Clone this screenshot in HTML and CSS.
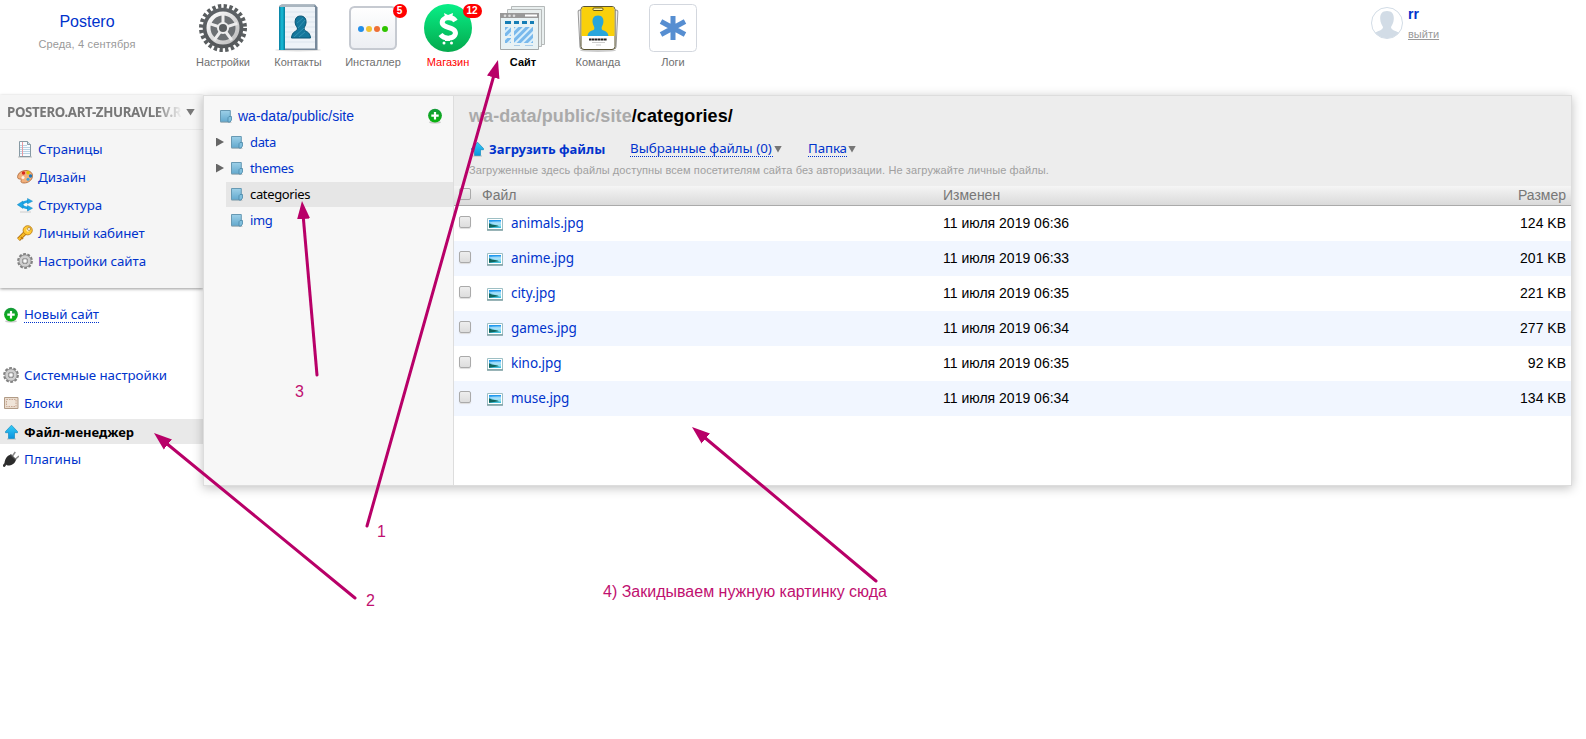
FILE: index.html
```html
<!DOCTYPE html>
<html lang="ru">
<head>
<meta charset="utf-8">
<title>Postero</title>
<link rel="stylesheet" href="styles.css">
</head>
<body>
<svg class="defs" width="0" height="0">
  <defs>
    <linearGradient id="metal" x1="0" y1="0" x2="0" y2="1"><stop offset="0" stop-color="#5d6266"/><stop offset="1" stop-color="#55585a"/></linearGradient>
    <linearGradient id="silver" x1="0" y1="0" x2="1" y2="1"><stop offset="0" stop-color="#fff"/><stop offset="1" stop-color="#bbb"/></linearGradient>
    <linearGradient id="green" x1="0" y1="0" x2="0" y2="1"><stop offset="0" stop-color="#08ef87"/><stop offset="1" stop-color="#04a94d"/></linearGradient>
    <linearGradient id="plus" x1="0" y1="0" x2="0" y2="1"><stop offset="0" stop-color="#169a3c"/><stop offset="1" stop-color="#08b40c"/></linearGradient>
    <linearGradient id="tile" x1="0" y1="0" x2="0" y2="1"><stop offset="0" stop-color="#fff"/><stop offset="1" stop-color="#eceef2"/></linearGradient>
    <linearGradient id="book" x1="0" y1="0" x2="1" y2="0"><stop offset="0" stop-color="#087da0"/><stop offset=".5" stop-color="#18bdd8"/><stop offset="1" stop-color="#047c9c"/></linearGradient>
    <linearGradient id="fold" x1="0" y1="0" x2="0" y2="1"><stop offset="0" stop-color="#9dd0e8"/><stop offset="1" stop-color="#63a9ce"/></linearGradient>
    <linearGradient id="sky" x1="0" y1="0" x2="0" y2="1"><stop offset="0" stop-color="#1590ee"/><stop offset=".65" stop-color="#9be6f5"/><stop offset="1" stop-color="#2cb8d8"/></linearGradient>
    <linearGradient id="blue" x1="0" y1="0" x2="0" y2="1"><stop offset="0" stop-color="#35ccf5"/><stop offset="1" stop-color="#0a93e0"/></linearGradient>
    <pattern id="stripes" width="5" height="5" patternUnits="userSpaceOnUse" patternTransform="rotate(45)"><rect width="5" height="5" fill="#d9effb"/><rect width="3" height="5" fill="#79b9ec"/></pattern>
    <symbol id="i-plus" viewBox="0 0 16 16"><ellipse cx="8" cy="14.2" rx="6" ry="1.4" fill="#aaa" opacity=".6"/><circle cx="8" cy="7.6" r="6.9" fill="url(#plus)"/><path d="M8 4v7.4M4.3 7.7h7.4" stroke="#fff" stroke-width="2.2"/></symbol>
    <symbol id="i-gear" viewBox="0 0 16 16"><circle cx="8" cy="8" r="6.7" fill="none" stroke="#818181" stroke-width="2.4" stroke-dasharray="2.8 1.41"/><circle cx="8" cy="8" r="4.4" fill="none" stroke="#8a8a8a" stroke-width="4"/><circle cx="8" cy="8" r="4.4" fill="none" stroke="#cfcfcf" stroke-width="2.6"/><circle cx="8" cy="8" r="2.3" fill="#fafafa" stroke="#8b8b8b" stroke-width=".8"/></symbol>
    <symbol id="i-up" viewBox="0 0 16 16"><path d="M4 15h9" stroke="#bbb"/><path d="M8.500 1.200 14.500 7.500v1.200h-3v5.700H5.500V8.700h-3V7.500z" fill="url(#blue)" stroke="#168cc0" stroke-width=".7"/></symbol>
    <symbol id="i-folder" viewBox="0 0 12 13"><path d="M.5 12.500h11" stroke="#ccc"/><path d="M.5.5h9.800v11.300H.5z" fill="url(#fold)" stroke="#6799b3"/><path d="M8 12V7.700l1-1.200h2.500V10L10 12z" fill="#80bfdd" stroke="#4b89aa" stroke-width=".8"/></symbol>
    <symbol id="i-image" viewBox="0 0 16 13"><path d="M.5.5h15v11.300H.5z" fill="#fff" stroke="#9dbfc4"/><path d="M0 12h16" stroke="#71969a" stroke-width="1.300"/><path d="M2 2h12v8H2z" fill="url(#sky)"/><path d="M2 5.200q3 1.400 6 1.800t4 1.200L2 9.800z" fill="#11665e"/><path d="M2 4.500q4-1.500 12-1V6q-6 1.300-12-1.500z" fill="#dff8ff" opacity=".5"/></symbol>
  </defs>
</svg>

<header class="top">
  <div class="account"><a class="account-name">Postero</a><div class="date">Среда, 4 сентября</div></div>
  <nav class="apps">
    <a class="app"><svg width="48" height="48" viewBox="0 0 48 48"><circle cx="24" cy="24" r="21.800" fill="none" stroke="#5a5e60" stroke-width="4.400" stroke-dasharray="3.300 2.407"/><circle cx="24" cy="24" r="20.300" fill="url(#metal)"/><circle cx="24" cy="24" r="14.500" fill="#6c7073" stroke="url(#silver)" stroke-width="4"/><path d="M24 24V9M24 24 9.700 19.400M24 24l14.300-4.600M24 24l-8.800 12.100M24 24l8.800 12.100" stroke="#ececec" stroke-width="3"/><circle cx="24" cy="24" r="6" fill="#eee"/><circle cx="24" cy="24" r="4" fill="#5a5e60"/></svg><span>Настройки</span></a>
    <a class="app"><svg width="48" height="48" viewBox="0 0 48 48"><ellipse cx="24" cy="46" rx="23" ry="1.500" fill="#ccc" opacity=".6"/><path d="M5 2 8 .5h33l2.500 3V46H5z" fill="#77899b"/><path d="M10 3h31v41.500H10z" fill="#eef3f8"/><path d="M11 8h30M11 13h30M11 18h30M11 23h30M11 28h30M11 33h30M11 38h30" stroke="#d7e1eb" stroke-width=".8"/><path d="M5 3h6v43H5z" fill="url(#book)"/><path d="M7 .5h34l-1 2.500H5z" fill="#aab6c0"/><path d="M26.500 12c4 0 6 3 5.500 7-.4 3-2 4-2 6 1 3 6 2 6.500 9h-19c.5-7 5-6 6-9 0-2-2-3-2.300-6-.4-4 1.300-7 5.300-7z" fill="#14779c" stroke="#075474"/><path d="m23 19 6-5m-5 10 7-8M20 33l10-9m-5 9 6-5" stroke="#3794b2" stroke-width=".9"/></svg><span>Контакты</span></a>
    <a class="app"><svg width="48" height="48" viewBox="0 0 48 48"><rect x="1" y="3" width="46" height="42" rx="4.500" fill="url(#tile)" stroke="#c6cad1" stroke-width="2"/><circle cx="12" cy="25" r="3" fill="#238ee8"/><circle cx="20" cy="25" r="3" fill="#f1c232"/><circle cx="28" cy="25" r="3" fill="#ee6f35"/><circle cx="36" cy="25" r="3" fill="#2fc400"/></svg><b class="badge">5</b><span>Инсталлер</span></a>
    <a class="app app-red"><svg width="48" height="48" viewBox="0 0 48 48"><circle cx="24" cy="24" r="24" fill="url(#green)"/><path d="M31.500 17c-2-3.200-6-3.500-8.500-3.100-5 .8-6.200 5.300-3 7.600 3 2.200 8.400 2.200 10.500 5 2.300 3.200 0 7.200-5.300 7.600-3 .2-6.500-.8-8.700-3.600" fill="none" stroke="#fff" stroke-width="5"/><path d="m21 13-1-4 4 2 5-2-1 6zM21 33h5v4h-5z" fill="#fff"/><circle cx="20" cy="39" r="1.500" fill="#fff"/><circle cx="27.500" cy="39" r="1.500" fill="#fff"/></svg><b class="badge badge-wide">12</b><span>Магазин</span></a>
    <a class="app app-on"><svg width="48" height="48" viewBox="0 0 48 48"><path d="M12.500 2.500h33v38h-33z" fill="#e8eeee" stroke="#b5b9b9"/><path d="M8.500 5.500h34v37h-34z" fill="#e8eeee" stroke="#b5b9b9"/><path d="M1.500 9.500h38v36h-38z" fill="#e8f2f4" stroke="#a5aaaa"/><path d="M1 9h39v5H1z" fill="#999"/><path d="M26 10.500h12v2H26z" fill="#fff"/><circle cx="6" cy="11.700" r="1.300" fill="#ddd"/><circle cx="10.500" cy="11.700" r="1.300" fill="#ddd"/><circle cx="15" cy="11.700" r="1.300" fill="#ddd"/><path d="M6 17h6v3H6zm9 0h5v3h-5zm8 0h5v3h-5zm8 0h4v3h-4z" fill="#147db5"/><path d="M6 23h6v9H6zm0 11h6v5H6zm9-11h19v16H15z" fill="url(#stripes)"/><path d="M15 41.500h6m5 0h8" stroke="#a9cce7"/></svg><span>Сайт</span></a>
    <a class="app"><svg width="48" height="48" viewBox="0 0 48 48"><ellipse cx="24" cy="46.500" rx="18" ry="1.500" fill="#ccc"/><rect x="5" y="5" width="34" height="39" rx="2" fill="#eee" stroke="#999" transform="rotate(-3 24 24)"/><rect x="8" y="5" width="35" height="39" rx="2" fill="#eee" stroke="#999" transform="rotate(3 24 24)"/><rect x="7" y="2.500" width="34" height="43" rx="3" fill="#fff" stroke="#5b5431"/><path d="M7.500 32V6q0-3 3-3H38q2.500 0 2.500 3v26z" fill="#f9d00b"/><rect x="19" y="4" width="10" height="2.500" rx="1" fill="#fff5ac" stroke="#665814"/><path d="M24 11.500c4.500 0 6 3.500 5.300 7.500-.5 2.500-2 3.500-1.600 6 .5 2.200 6 1 6.800 7h-21c.8-6 6-4.800 6.800-7 .4-2.500-1.200-3.500-1.600-6-.7-4 .8-7.500 5.300-7.500z" fill="#27a6dc"/><path d="M15 35.500h18" stroke="#222" stroke-width="2" stroke-dasharray="2.500 .4"/><path d="M18 38.500h13m-9 2.500h5" stroke="#ccc"/></svg><span>Команда</span></a>
    <a class="app"><svg width="48" height="48" viewBox="0 0 48 48"><rect x=".5" y=".5" width="47" height="47" rx="4" fill="#fff" stroke="#d3d7de"/><path d="M24 12v24M12 17.500l24 13M36 17.500l-24 13" stroke="#568ed1" stroke-width="5"/></svg><span>Логи</span></a>
  </nav>
  <div class="user">
    <svg width="32" height="32" viewBox="0 0 32 32"><circle cx="16" cy="16" r="15.500" fill="#fff" stroke="#d2dce6"/><path d="M16 4c5 0 7 3 6.800 8-.2 4-1.800 6-2.800 8 0 3 4 3.500 8 5.600A15.500 15.500 0 0 1 4 25.600C8 23.500 12 23 12 20c-1-2-2.600-4-2.800-8C9 7 11 4 16 4z" fill="#d2dce6"/></svg>
    <div class="user-text"><b>rr</b><a>выйти</a></div>
  </div>
</header>

<div class="main">
  <aside class="side">
    <section class="site">
      <div class="site-head"><span class="domain">POSTERO.ART-ZHURAVLEV.R</span><i class="down"></i></div>
      <ul class="menu">
        <li><svg width="16" height="17" viewBox="0 0 16 17"><path d="M1 16h14" stroke="#bbb"/><path d="M2.500.500h8l3 3v12h-11z" fill="#f7fbff" stroke="#879aa4"/><path d="M10.500.5v3h3" fill="#cde" stroke="#879aa4"/><path d="M3 4.500h7M3 6.500h10M3 8.500h10M3 10.500h10M3 12.500h10" stroke="#b8d3e4"/><path d="M5.500 1v14" stroke="#e69aa0"/></svg><a>Страницы</a></li>
        <li><svg width="16" height="16" viewBox="0 0 16 16"><path d="M9 1.500c4 0 7 2.500 6.500 6-.5 3.500-4 6.500-8.500 6.500-2.500 0-3.500-1-2.800-2.500.5-1.200-.4-1.500-1.700-1.500C.5 10 .2 8 1 6c1.200-3 4.500-4.500 8-4.500z" fill="#f2b07c" stroke="#ab6231" stroke-width=".8"/><circle cx="6.500" cy="4" r="1.700" fill="#d9271e"/><circle cx="11" cy="3.800" r="1.700" fill="#e0c300"/><circle cx="13.500" cy="7" r="1.700" fill="#1b77ba"/><circle cx="11" cy="10.300" r="1.500" fill="#41a4d6"/><circle cx="6" cy="8.500" r="1.500" fill="#fff3e6"/></svg><a>Дизайн</a></li>
        <li><svg width="16" height="16" viewBox="0 0 16 16"><path d="M3 15h11" stroke="#ccc"/><path d="M12 4C8 4.300 5.500 6 3.500 7.700c2 2 4.500 3.300 8.500 3.600" fill="none" stroke="#1ba4e6" stroke-width="2.600"/><path d="M.3 7.700 6 4v7.400zM10.500 1.500l5 2.700-5 2.600zM10.500 8.500l5 2.700-5 2.800z" fill="#1da8e8" stroke="#1585bd" stroke-width=".5"/></svg><a>Структура</a></li>
        <li><svg width="16" height="16" viewBox="0 0 16 16"><path d="m8.500 7.500-7 7" stroke="#a9660d" stroke-width="4"/><path d="m9 7-7.400 7.400" stroke="#f7ba24" stroke-width="2.500"/><path d="m4 12 2 2" stroke="#bd7b12" stroke-width="1.600"/><circle cx="10.700" cy="5.300" r="4.600" fill="#ffc934" stroke="#b77710" stroke-width=".8"/><path d="m10 4 2 2" stroke="#fff2c2" stroke-width="3"/><circle cx="12" cy="4" r="1.500" fill="#fff" stroke="#9d742c" stroke-width=".7"/></svg><a>Личный кабинет</a></li>
        <li><svg width="16" height="16"><use href="#i-gear"/></svg><a>Настройки сайта</a></li>
      </ul>
    </section>
    <div class="new"><svg width="16" height="16"><use href="#i-plus"/></svg><a>Новый сайт</a></div>
    <ul class="menu system">
      <li><svg width="16" height="16"><use href="#i-gear"/></svg><a>Системные настройки</a></li>
      <li><svg width="16" height="16" viewBox="0 0 16 16"><path d="M1.500 2.500h13.500v11H1.500z" fill="#eadccd" stroke="#b19b86"/><path d="M3.500 4.500h9.500v7H3.500z" fill="#efe4d8" stroke="#c9a894" stroke-dasharray="1.500 1"/></svg><a>Блоки</a></li>
      <li class="current"><svg width="16" height="16"><use href="#i-up"/></svg><a>Файл-менеджер</a></li>
      <li><svg width="16" height="16" viewBox="0 0 16 16"><path d="m.3 15.500 3.500-4" stroke="#333" stroke-width="2.600"/><path d="M1.500 12c.5-5 3-7.500 6.500-8.500l5 5c-1 4-4 6-8.500 6z" fill="#2c2c2c"/><path d="m9.500 5 2.800-4m0 7.300L16 5" stroke="#8a8a8a" stroke-width="1.500"/><path d="m7.500 3.500 5.500 5.500" stroke="#555" stroke-width="1.300"/></svg><a>Плагины</a></li>
    </ul>
  </aside>

  <main class="panel">
    <section class="tree">
      <div class="root"><svg width="12" height="13"><use href="#i-folder"/></svg><a>wa-data/public/site</a><svg class="add" width="16" height="16"><use href="#i-plus"/></svg></div>
      <div class="node"><i class="right"></i><p><svg width="12" height="13"><use href="#i-folder"/></svg><a>data</a></p></div>
      <div class="node"><i class="right"></i><p><svg width="12" height="13"><use href="#i-folder"/></svg><a>themes</a></p></div>
      <div class="node picked"><i></i><p><svg width="12" height="13"><use href="#i-folder"/></svg><a>categories</a></p></div>
      <div class="node"><i></i><p><svg width="12" height="13"><use href="#i-folder"/></svg><a>img</a></p></div>
    </section>
    <section class="files">
      <div class="files-head">
        <h1><span>wa-data/public/site</span>/categories/</h1>
        <div class="tools"><svg width="16" height="16"><use href="#i-up"/></svg><a class="upload">Загрузить файлы</a><a class="drop chosen">Выбранные файлы (0)</a><i class="down"></i><a class="drop dir">Папка</a><i class="down"></i></div>
        <p class="note">Загруженные здесь файлы доступны всем посетителям сайта без авторизации. Не загружайте личные файлы.</p>
      </div>
      <div class="row heading"><i class="check"></i><span class="name">Файл</span><span class="time">Изменен</span><span class="size">Размер</span></div>
      <div class="row"><i class="check"></i><svg width="16" height="13"><use href="#i-image"/></svg><a class="name">animals.jpg</a><span class="time">11 июля 2019 06:36</span><span class="size">124 KB</span></div>
      <div class="row tinted"><i class="check"></i><svg width="16" height="13"><use href="#i-image"/></svg><a class="name">anime.jpg</a><span class="time">11 июля 2019 06:33</span><span class="size">201 KB</span></div>
      <div class="row"><i class="check"></i><svg width="16" height="13"><use href="#i-image"/></svg><a class="name">city.jpg</a><span class="time">11 июля 2019 06:35</span><span class="size">221 KB</span></div>
      <div class="row tinted"><i class="check"></i><svg width="16" height="13"><use href="#i-image"/></svg><a class="name">games.jpg</a><span class="time">11 июля 2019 06:34</span><span class="size">277 KB</span></div>
      <div class="row"><i class="check"></i><svg width="16" height="13"><use href="#i-image"/></svg><a class="name">kino.jpg</a><span class="time">11 июля 2019 06:35</span><span class="size">92 KB</span></div>
      <div class="row tinted"><i class="check"></i><svg width="16" height="13"><use href="#i-image"/></svg><a class="name">muse.jpg</a><span class="time">11 июля 2019 06:34</span><span class="size">134 KB</span></div>
    </section>
  </main>
</div>

<svg class="notes" width="1586" height="739" viewBox="0 0 1586 739">
  <defs><marker id="head" markerUnits="userSpaceOnUse" markerWidth="19" markerHeight="14" refX="18" refY="7" orient="auto"><path d="M0 .5 18 7 0 13.500z" fill="#b80068"/></marker></defs>
  <g fill="none" stroke="#b80068" stroke-width="3" stroke-linecap="round">
    <path d="M367 526 494 75"/><path d="M355 598 166 443"/><path d="m317 375-14-161"/><path d="M876 581 704 437"/>
  </g>
  <g fill="none" stroke="none">
    <path d="M367 526 498 60" marker-end="url(#head)"/><path d="M355 598 154 433" marker-end="url(#head)"/><path d="M317 375 302 201" marker-end="url(#head)"/><path d="M876 581 692 427" marker-end="url(#head)"/>
  </g>
  <g fill="#c01070">
    <text x="377" y="537">1</text><text x="366" y="606">2</text><text x="295" y="397">3</text><text x="603" y="597">4) Закидываем нужную картинку сюда</text>
  </g>
</svg>
</body>
</html>
```
FILE: styles.css
```css
* { box-sizing: border-box; }
body { margin: 0; height: 739px; overflow: hidden; background: #fff; color: #000; font: 14px/18px "Liberation Sans", Arial, sans-serif; }
ul, p, h1 { margin: 0; padding: 0; list-style: none; }
svg { display: block; flex: none; }
.defs { position: absolute; }
a { color: #03c; }

.top { display: flex; height: 95px; }
.account { width: 174px; padding-top: 13px; text-align: center; }
.account-name { font-size: 16px; }
.date { margin-top: 4px; font-size: 11px; letter-spacing: .15px; color: #999; }
.apps { display: flex; margin-left: 11.5px; padding-top: 4px; }
.app { position: relative; display: flex; flex-direction: column; align-items: center; width: 75px; font-size: 11px; line-height: 13px; color: #707070; }
.app span { margin-top: 4px; }
.app.app-red { color: red; }
.app.app-on { color: #000; font-weight: bold; }
.badge { position: absolute; top: 0; left: 57px; width: 14px; height: 14px; border-radius: 7px; background: red; color: #fff; font: bold 10px/14px "Liberation Sans", Arial, sans-serif; text-align: center; }
.badge-wide { left: 52px; width: 19px; }
.user { display: flex; gap: 5px; margin-left: 660.5px; padding-top: 7px; }
.user-text { display: flex; flex-direction: column; color: #03c; font-size: 14px; line-height: 14px; }
.user-text a { margin-top: 6px; color: #999; font-size: 11px; text-decoration: underline; }

.main { display: flex; height: 391px; }
.side { width: 203px; font-family: "Noto Sans", sans-serif; font-size: 13.3px; }
.site { height: 193px; background: #f5f5f5; box-shadow: 0 1px 3px #999; }
.site-head { display: flex; align-items: center; height: 35px; padding: 0 0 0 7px; border-bottom: 1px solid #e9e9e9; }
.domain { width: 177px; overflow: hidden; white-space: nowrap; font-weight: bold; font-size: 13.3px; letter-spacing: -.35px; color: #777; -webkit-mask-image: linear-gradient(90deg, #000 84%, transparent 99%); mask-image: linear-gradient(90deg, #000 84%, transparent 99%); }
.down { width: 9px; height: 7px; background: #777; clip-path: polygon(0 0, 100% 0, 50% 100%); }
.site-head .down { margin-left: 2px; }
.menu { padding: 5px 0 0 17px; }
.menu li { display: flex; align-items: center; gap: 5px; height: 28px; white-space: nowrap; }
.menu a, .new a { letter-spacing: -.05px; }
.new { display: flex; align-items: center; gap: 5px; height: 53px; padding-left: 3px; }
.new a { line-height: 15px; border-bottom: 1px dotted #03c; }
.system { padding: 20px 0 0 3px; }
.menu .current { height: 25px; margin: 2px 0 1px -3px; padding-left: 3px; background: #e9e9e9; }
.menu .current a { color: #000; font-weight: bold; font-size: 13px; letter-spacing: 0; }

.panel { display: flex; width: 1369px; border: 1px solid #ddd; background: #fff; box-shadow: 0 2px 10px rgba(0,0,0,.25); z-index: 1; }
.tree { width: 250px; border-right: 1px solid #ddd; background: #f7f7f7; font-family: "Noto Sans", sans-serif; }
.root { display: flex; align-items: center; height: 33px; padding: 7px 10px 0 16px; gap: 6px; font-family: "Liberation Sans", Arial, sans-serif; }
.add { margin-left: auto; }
.node { display: flex; align-items: center; height: 26px; padding-left: 12px; }
.node i { width: 8px; height: 9px; margin-right: 2px; }
.node .right { background: #666; clip-path: polygon(0 0, 100% 50%, 0 100%); }
.node p { display: flex; align-items: center; align-self: flex-end; gap: 7px; flex: 1; height: 25px; padding-left: 5px; }
.node a { padding-bottom: 1px; font-size: 13px; letter-spacing: -.35px; }
.picked p { background: #e6e6e6; }
.picked a { color: #000; }

.files { flex: 1; }
.files-head { height: 90px; padding: 9px 0 0 15px; background: #ededed; }
h1 { font-size: 18px; line-height: 22px; letter-spacing: .09px; }
h1 span { color: #aaa; }
.tools { display: flex; align-items: center; height: 18px; margin-top: 13px; font-family: "Noto Sans", sans-serif; font-size: 13.3px; }
.upload { width: 141px; margin-left: 4px; font-weight: bold; font-size: 13px; white-space: nowrap; }
.drop { line-height: 15px; border-bottom: 1px dotted #03c; white-space: nowrap; }
.chosen { width: 143px; }
.dir { width: 39px; margin-left: 26px; letter-spacing: -.1px; }
.tools .down { margin-left: 1px; width: 8px; }
.note { margin-top: 4px; font-size: 11px; line-height: 16px; letter-spacing: .1px; color: #a0a0a0; white-space: nowrap; }
.row { display: flex; align-items: center; height: 35px; padding: 0 5px 1px; }
.tinted { background: #f1f6ff; }
.row svg { margin: 3px 8px 0 16px; }
.check { width: 12px; height: 12px; margin: -2px 0 0; border: 1px solid #aaa; border-radius: 2px; background: linear-gradient(#eee, #ddd); box-shadow: 0 1px 1px #ddd; }
.name { width: 432px; }
a.name { font-family: "Noto Sans", sans-serif; font-size: 13.5px; letter-spacing: -.05px; }
.size { margin-left: auto; }
.row.heading { height: 20px; border-bottom: 1px solid #aaa; background: linear-gradient(#f5f5f5, #dadada); color: #777; }
.heading .name { width: 461px; margin-left: 11px; }

.notes { position: absolute; top: 0; left: 0; z-index: 2; pointer-events: none; font: 16px "Liberation Sans", Arial, sans-serif; }
```
